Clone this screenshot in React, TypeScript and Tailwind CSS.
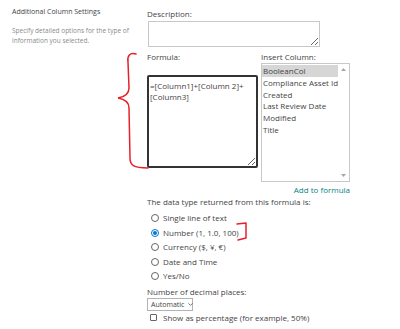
import { ChevronDown } from 'lucide-react';

export default function App() {
    const columns = ["BooleanCol", "Compliance Asset Id", "Created", "Last Review Date", "Modified", "Title"];
    const types = ["Single line of text", "Number (1, 1.0, 100)", "Currency ($, ¥, €)", "Date and Time", "Yes/No"];

    return (
        <div className="relative flex h-[329px] w-[400px] overflow-hidden bg-white font-['Open_Sans',sans-serif] text-[8px] text-[#444]">
            {/* Section description */}
            <div className="w-[147px] shrink-0 pl-[12px] pr-[4px] pt-[6px]">
                <div className="text-[7px] leading-[12px] text-[#444]">Additional Column Settings</div>
                <div className="mt-[8px] text-[6.5px] leading-[10px] text-[#8a8a8a]">
                    Specify detailed options for the type of information you selected.
                </div>
            </div>

            {/* Form fields */}
            <div className="pt-[8px]">
                <div className="leading-[12px]">Description:</div>
                <textarea
                    readOnly
                    className="mt-[1px] ml-[1px] block h-[26px] w-[172px] border border-[#c8c8c8] bg-white p-[2px] outline-none"
                />

                <div className="mt-[4px] flex">
                    <div className="w-[114px]">
                        <div className="leading-[12px]">Formula:</div>
                        <textarea
                            readOnly
                            defaultValue="=[Column1]+[Column 2]+[Column3]"
                            className="mt-[12px] block h-[93px] w-[111px] rounded-[2px] border-2 border-[#333] bg-white px-[1px] pt-[3px] leading-[11px] text-[#444] outline-none"
                        />
                    </div>
                    <div>
                        <div className="leading-[12px]">Insert Column:</div>
                        <div className="flex h-[119px] w-[89px] border border-[#c8c8c8] bg-white">
                            <div className="flex-1 pt-[1px]">
                                {columns.map((c, i) => (
                                    <div
                                        key={c}
                                        className={`h-[11.8px] whitespace-nowrap pl-[1px] leading-[11.8px] ${i === 0 ? 'bg-[#d6d6d6]' : ''}`}
                                    >
                                        {c}
                                    </div>
                                ))}
                            </div>
                            <div className="flex w-[11px] flex-col items-center justify-between py-[4px]">
                                <svg width="5" height="3" viewBox="0 0 5 3"><path d="M0 3 L2.5 0 L5 3 Z" fill="#a6a6a6" /></svg>
                                <svg width="5" height="3" viewBox="0 0 5 3"><path d="M0 0 L2.5 3 L5 0 Z" fill="#a6a6a6" /></svg>
                            </div>
                        </div>
                        <div className="mt-[2px] text-right leading-[12px] text-[#038387]">Add to formula</div>
                    </div>
                </div>

                <div className="leading-[12px]">The data type returned from this formula is:</div>
                <div className="mt-[3px] flex flex-col">
                    {types.map((t, i) => (
                        <div key={t} className="flex h-[14.5px] items-center gap-[4px] pl-[4px]">
                            {i === 1 ? (
                                <span className="flex h-[8px] w-[8px] items-center justify-center rounded-full border border-[#0078d4]">
                                    <span className="h-[4px] w-[4px] rounded-full bg-[#0078d4]" />
                                </span>
                            ) : (
                                <span className="h-[8px] w-[8px] rounded-full border border-[#666]" />
                            )}
                            <span className="leading-[12px]">{t}</span>
                        </div>
                    ))}
                </div>

                <div className="mt-[2px] leading-[12px]">Number of decimal places:</div>
                <div className="flex h-[13px] w-[46px] items-center gap-[3px] border border-[#b3b3b3] pl-[3px]">
                    <span className="text-[7px] leading-[11px]">Automatic</span>
                    <ChevronDown className="shrink-0" size={7} strokeWidth={2.5} color="#444" />
                </div>
                <div className="mt-[1px] flex h-[12px] items-center gap-[6px] pl-[3px]">
                    <span className="h-[7px] w-[7px] rounded-[1px] border border-[#666]" />
                    <span className="leading-[12px]">Show as percentage (for example, 50%)</span>
                </div>
            </div>

            {/* Red annotations */}
            <svg className="pointer-events-none absolute inset-0" width="400" height="329" viewBox="0 0 400 329">
                <path
                    d="M136 54 C130 52 127 56 128 62 L129 88 C129 94 124 97 118 98 C124 99 129 102 129 108 L130 158 C130 165 133 168 148 168"
                    fill="none"
                    stroke="#e8202a"
                    strokeWidth="1.5"
                    strokeLinecap="round"
                />
                <path
                    d="M237 224 L246 223 L246 238 L238 240"
                    fill="none"
                    stroke="#e8202a"
                    strokeWidth="1.5"
                    strokeLinecap="round"
                    strokeLinejoin="round"
                />
            </svg>
        </div>
    );
}
